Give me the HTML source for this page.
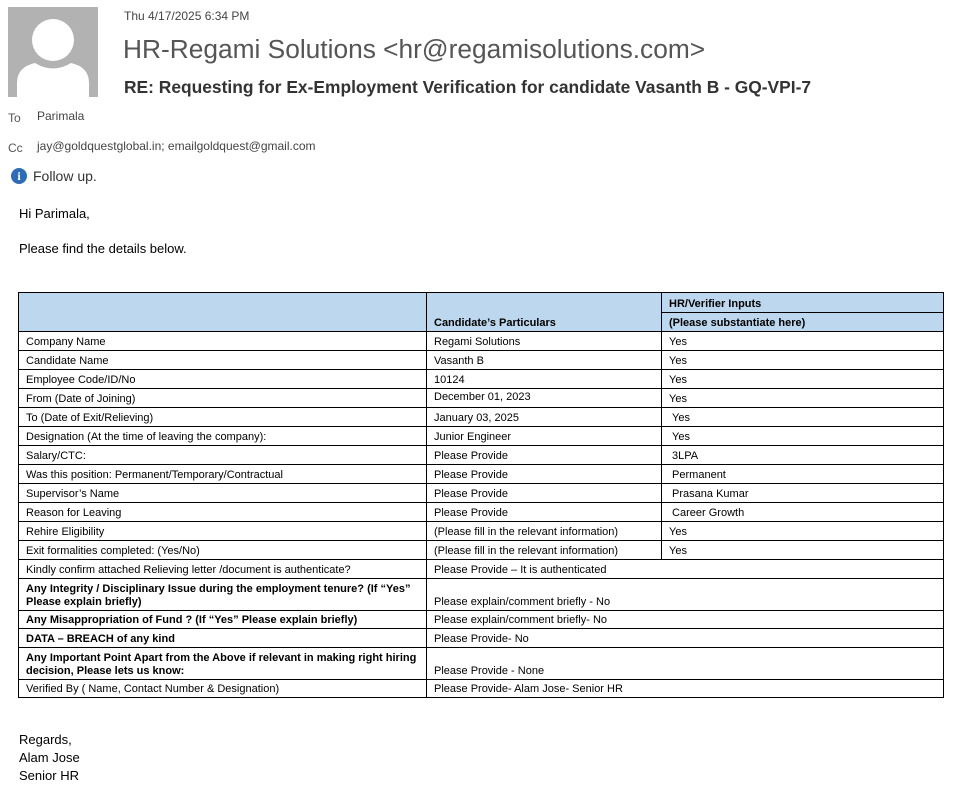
<!DOCTYPE html>
<html><head><meta charset="utf-8"><style>
*{margin:0;padding:0;box-sizing:border-box}
body{width:963px;height:781px;overflow:hidden;background:#fff;font-family:"Liberation Sans",sans-serif;color:#000;position:relative}
.a{position:absolute;white-space:nowrap}
table{position:absolute;left:18px;top:292px;border-collapse:collapse;table-layout:fixed;font-size:11px}
td{border:1px solid #000;padding:0 7px 1px;vertical-align:bottom;line-height:13px;overflow:hidden}
.h{background:#bdd7ee;font-weight:bold}
b{font-weight:bold}
</style></head><body>
<svg class="a" style="left:8px;top:7px" width="90" height="90" viewBox="0 0 90 90">
<rect width="90" height="90" fill="#b2b2b2"/>
<circle cx="45" cy="33" r="21" fill="#fff"/>
<path d="M9 90 L9 76 Q9 60 27 56 Q45 67 63 56 Q81 60 81 76 L81 90 Z" fill="#fff"/>
</svg>
<div class="a" style="left:124px;top:9px;font-size:12px;color:#444">Thu 4/17/2025 6:34 PM</div>
<div class="a" style="left:123px;top:34px;font-size:26.3px;color:#555">HR-Regami Solutions &lt;hr@regamisolutions.com&gt;</div>
<div class="a" style="left:124px;top:77px;font-size:17.4px;font-weight:bold;color:#333">RE: Requesting for Ex-Employment Verification for candidate Vasanth B - GQ-VPI-7</div>
<div class="a" style="left:8px;top:111px;font-size:12px;color:#555">To</div>
<div class="a" style="left:37px;top:109px;font-size:12px;color:#444">Parimala</div>
<div class="a" style="left:8px;top:141px;font-size:12px;color:#555">Cc</div>
<div class="a" style="left:37px;top:139px;font-size:12px;color:#444">jay@goldquestglobal.in; emailgoldquest@gmail.com</div>
<div class="a" style="left:11px;top:168px;width:16px;height:16px;border-radius:50%;background:#2e6db4;color:#fff;font:bold 12px/16px 'Liberation Serif',serif;text-align:center">i</div>
<div class="a" style="left:33px;top:168px;font-size:14px;color:#333">Follow up.</div>
<div class="a" style="left:19px;top:206px;font-size:13px">Hi Parimala,</div>
<div class="a" style="left:19px;top:241px;font-size:13px">Please find the details below.</div>
<table>
<colgroup><col style="width:408px"><col style="width:235px"><col style="width:282px"></colgroup>
<tr style="height:20px"><td class="h" rowspan="2"></td><td class="h" rowspan="2">Candidate’s Particulars</td><td class="h">HR/Verifier Inputs</td></tr>
<tr style="height:19px"><td class="h">(Please substantiate here)</td></tr>
<tr style="height:19px"><td>Company Name</td><td>Regami Solutions</td><td>Yes</td></tr>
<tr style="height:19px"><td>Candidate Name</td><td>Vasanth B</td><td>Yes</td></tr>
<tr style="height:19px"><td>Employee Code/ID/No</td><td>10124</td><td>Yes</td></tr>
<tr style="height:19px"><td>From (Date of Joining)</td><td style="vertical-align:top;padding-top:2px">December 01, 2023</td><td>Yes</td></tr>
<tr style="height:19px"><td>To (Date of Exit/Relieving)</td><td>January 03, 2025</td><td>&nbsp;Yes</td></tr>
<tr style="height:19px"><td>Designation (At the time of leaving the company):</td><td>Junior Engineer</td><td>&nbsp;Yes</td></tr>
<tr style="height:19px"><td>Salary/CTC:</td><td>Please Provide</td><td>&nbsp;3LPA</td></tr>
<tr style="height:19px"><td>Was this position: Permanent/Temporary/Contractual</td><td>Please Provide</td><td>&nbsp;Permanent</td></tr>
<tr style="height:19px"><td>Supervisor’s Name</td><td>Please Provide</td><td>&nbsp;Prasana Kumar</td></tr>
<tr style="height:19px"><td>Reason for Leaving</td><td>Please Provide</td><td>&nbsp;Career Growth</td></tr>
<tr style="height:19px"><td>Rehire Eligibility</td><td>(Please fill in the relevant information)</td><td>Yes</td></tr>
<tr style="height:19px"><td>Exit formalities completed: (Yes/No)</td><td>(Please fill in the relevant information)</td><td>Yes</td></tr>
<tr style="height:19px"><td>Kindly confirm attached Relieving letter /document is authenticate?</td><td colspan="2">Please Provide – It is authenticated</td></tr>
<tr style="height:32px"><td style="white-space:normal"><b>Any Integrity / Disciplinary Issue during the employment tenure? (If “Yes” Please explain briefly)</b></td><td colspan="2">Please explain/comment briefly - No</td></tr>
<tr style="height:18px"><td><b>Any Misappropriation of Fund ? (If “Yes” Please explain briefly)</b></td><td colspan="2">Please explain/comment briefly- No</td></tr>
<tr style="height:19px"><td><b>DATA – BREACH of any kind</b></td><td colspan="2">Please Provide- No</td></tr>
<tr style="height:32px"><td style="white-space:normal"><b>Any Important Point Apart from the Above if relevant in making right hiring decision, Please lets us know:</b></td><td colspan="2">Please Provide - None</td></tr>
<tr style="height:18px"><td>Verified By ( Name, Contact Number &amp; Designation)</td><td colspan="2">Please Provide- Alam Jose- Senior HR</td></tr>
</table>
<div class="a" style="left:19px;top:731px;font-size:13px;line-height:18px">Regards,<br>Alam Jose<br>Senior HR</div>
</body></html>
